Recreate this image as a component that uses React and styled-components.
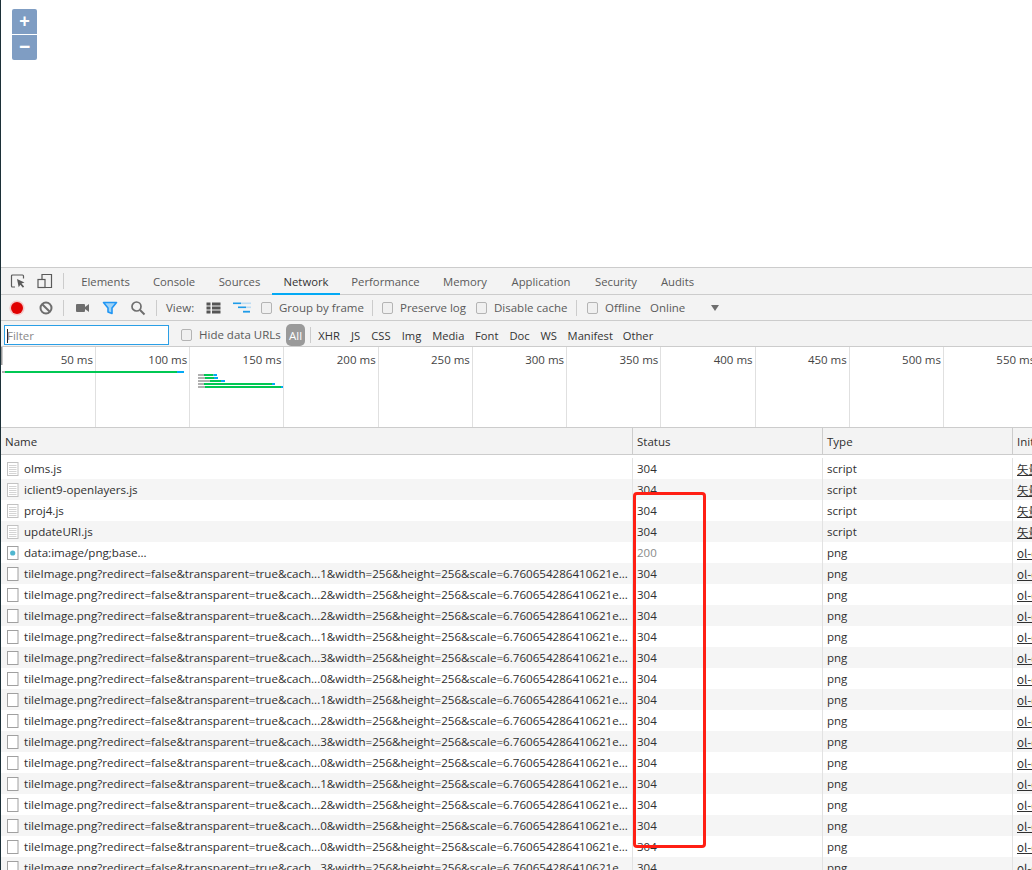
import React from "react";
import styled, { createGlobalStyle } from "styled-components";

const Global = createGlobalStyle`
  html, body { margin: 0; padding: 0; background: #fff; }
  body { font-family: "Open Sans", "Noto Sans", "Noto Sans CJK SC", sans-serif; font-size: 11.5px; color: #303030; }
`;

const Page = styled.div`
  width: 1032px; height: 870px; box-sizing: border-box; position: relative;
  border-left: 1px solid #1c3038; overflow: hidden; display: flex; flex-direction: column;
`;
const MapArea = styled.div`
  height: 267px; flex: none; box-sizing: border-box; padding: 9px 11px; display: flex; flex-direction: column; gap: 1px;
`;
const ZoomBtn = styled.div`
  width: 25px; height: 25px; background: #7f9dc3; color: #fff; font: bold ${p => p.$top ? 18 : 19}px/24px "Liberation Sans", sans-serif;
  text-align: center; border-radius: ${p => p.$top ? "2px 2px 0 0" : "0 0 2px 2px"};
`;
const Devtools = styled.div`flex: 1; min-height: 0; display: flex; flex-direction: column; background: #fff;`;
const Bar = styled.div`
  flex: none; height: ${p => p.$h}px; box-sizing: border-box; background: #f3f3f3; display: flex; align-items: center;
  padding-top: ${p => p.$pt || 0}px;
  border-bottom: 1px solid #ccc; border-top: ${p => p.$top ? "1px solid #ccc" : "0"}; color: #5a5a5a; white-space: nowrap;
`;
const Slot = styled.div`
  flex: none; width: ${p => p.$w}px; height: 100%; display: flex; align-items: center; justify-content: ${p => p.$left ? "flex-start" : "center"};
`;
const Sep = styled.div`flex: none; width: 1px; height: 16px; background: #ccc; margin: 0 ${p => p.$r}px 0 ${p => p.$l}px;`;
const Tab = styled.div`
  flex: none; width: ${p => p.$w}px; height: 27px; box-sizing: border-box; display: flex; align-items: center; justify-content: center;
  font-size: 11.3px; padding-top: 2px;
  color: ${p => p.$on ? "#333" : "#5a5a5a"}; border-bottom: 2px solid ${p => p.$on ? "#03a9f4" : "transparent"};
  margin-bottom: -1px;
`;
const Check = styled.span`
  flex: none; width: 9px; height: 10px; border: 1px solid #b4b4b4; border-radius: 2px; background: #f0f0f0; margin-right: 7px;
`;
const Label = styled.span`color: ${p => p.$c || "#5a5a5a"};`;
const FilterInput = styled.div`
  flex: none; margin-left: 3px; width: 165px; height: 20px; box-sizing: border-box; border: 1px solid #2b9fe6; background: #fff;
  display: flex; align-items: center; padding: 2px 0 0 2px; color: #8a8a8a; margin-right: 12px;
`;
const Caret = styled.span`width: 1px; height: 14px; background: #222; margin-right: -1px;`;
const AllBtn = styled.div`
  flex: none; width: 19px; height: 22px; margin-top: 1px; border-radius: 5px; background: #9a9a9a; color: #fff; display: flex; align-items: center; justify-content: center;
`;
const Type = styled.div`flex: none; width: ${p => p.$w}px; padding-top: 1px; text-align: center; color: #333; font-size: 11.2px;`;
const Timeline = styled.div`
  flex: none; height: 81px; box-sizing: border-box; padding-left: 0.78px; border-bottom: 1px solid #ccc; background: #fff; display: flex; position: relative; overflow: hidden;
`;
const Tick = styled.div`
  flex: none; width: 94.22px; box-sizing: border-box; border-right: 1px solid #e0e0e0; text-align: right; padding: 5px 2px 0 0; color: #444; line-height: 16px;
`;
const Overlay = styled.svg`position: absolute; left: -1px; top: 0; pointer-events: none;`;
const HeadRow = styled.div`
  flex: none; height: 27px; box-sizing: border-box; background: #f3f3f3; border-bottom: 1px solid #ccc; display: flex; color: #333;
`;
const Cell = styled.div`
  flex: none; width: ${p => p.$w}px; box-sizing: border-box; padding-left: ${p => p.$pl || 4}px; display: flex; align-items: center; overflow: hidden; white-space: nowrap;
  border-left: ${p => p.$first ? "0" : `1px solid ${p.$head ? "#ccc" : "#e2e2e2"}`}; color: ${p => p.$c || "#303030"};
`;
const Rows = styled.div`flex: 1; min-height: 0; padding-top: 3px; overflow: hidden;`;
const Row = styled.div`display: flex; height: 21px; background: ${p => p.$alt ? "#f5f5f5" : "#fff"};`;
const FileName = styled.span`margin-left: 5px; font-size: 11.6px;`;
const Link = styled.span`text-decoration: underline; color: #303030; font-family: "Noto Sans CJK SC", "Open Sans", sans-serif;`;
const Mark = styled.div`
  position: absolute; left: 632px; top: 492px; width: 73px; height: 356px; box-sizing: border-box; border: 3px solid #ff1f14; border-radius: 4px;
`;

const Icon = ({ w = 16, h = 16, children }) => <svg width={w} height={h} viewBox={`0 0 ${w} ${h}`} style={{ display: "block" }}>{children}</svg>;

const FileIcon = ({ kind }) => (
  <svg width="13" height="14" viewBox="0 0 13 14" style={{ flex: "none", display: "block" }}>
    <rect x="1.5" y="0.5" width="10.5" height="13" fill="#fff" stroke={kind === "doc" ? "#c2c2c2" : "#a0a0a0"} />
    {kind === "doc" && [3, 5, 7, 9, 11].map(y => <rect key={y} x="3" y={y} width="7.5" height="1" fill="#d4d4d4" />)}
    {kind === "dot" && <circle cx="6.7" cy="7" r="2.6" fill="#4fb6cf" />}
  </svg>
);

const longName = d => `tileImage.png?redirect=false&transparent=true&cach...${d}&width=256&height=256&scale=6.760654286410621e...`;
const rows = [
  { n: "olms.js", s: "304", t: "script", i: "矢量瓦片", k: "doc" },
  { n: "iclient9-openlayers.js", s: "304", t: "script", i: "矢量瓦片", k: "doc" },
  { n: "proj4.js", s: "304", t: "script", i: "矢量瓦片", k: "doc" },
  { n: "updateURI.js", s: "304", t: "script", i: "矢量瓦片", k: "doc" },
  { n: "data:image/png;base...", s: "200", t: "png", i: "ol-debug.js", k: "dot", dim: true },
  ...[1, 2, 2, 1, 3, 0, 1, 2, 3, 0, 1, 2, 0, 0, 3].map(d => ({ n: longName(d), s: "304", t: "png", i: "ol-debug.js", k: "blank" })),
];

const tabs = [["Elements", 71], ["Console", 66], ["Sources", 65], ["Network", 68, true], ["Performance", 91], ["Memory", 68], ["Application", 84], ["Security", 66], ["Audits", 57]];
const types = [["XHR", 32], ["JS", 21], ["CSS", 30], ["Img", 31], ["Media", 42.5], ["Font", 34.5], ["Doc", 31], ["WS", 27.5], ["Manifest", 55.5], ["Other", 40]];
const ticks = [50, 100, 150, 200, 250, 300, 350, 400, 450, 500, 550];
const bars = [
  [2, 5, 177, 184, 371],
  [198, 204, 213.5, 217, 374],
  [198, 205, 214, 218, 377],
  [198, 210, 221, 225, 380],
  [198, 204, 272, 275, 383],
  [198, 205, 281, 283, 386],
];

export default function App() {
  return (
    <Page>
      <Global />
      <MapArea>
        <ZoomBtn $top>+</ZoomBtn>
        <ZoomBtn>−</ZoomBtn>
      </MapArea>
      <Devtools>
        <Bar $h={28} $top>
          <Slot $w={34}>
            <Icon>
              <path d="M5 14H2.5a1 1 0 0 1-1-1V3a1 1 0 0 1 1-1h10a1 1 0 0 1 1 1v2.5" fill="none" stroke="#5a5a5a" strokeWidth="1.2" />
              <path d="M7 6l7.5 3.6-3 1 2.6 3-1.2 1.1-2.6-3-1.6 2.6z" fill="#5a5a5a" />
            </Icon>
          </Slot>
          <Slot $w={19}>
            <Icon>
              <path d="M5 6V1.5h9.5v13H8" fill="none" stroke="#5a5a5a" strokeWidth="1.2" />
              <rect x="1" y="6.5" width="7" height="8" fill="#f3f3f3" stroke="#5a5a5a" strokeWidth="1.2" />
            </Icon>
          </Slot>
          <Sep $l={9} $r={6} />
          {tabs.map(([t, w, on]) => <Tab key={t} $w={w} $on={on}>{t}</Tab>)}
        </Bar>
        <Bar $h={26}>
          <Slot $w={32}>
            <Icon>
              <circle cx="8" cy="8" r="7.6" fill="#f3b5b5" opacity="0.7" />
              <circle cx="8" cy="8" r="6" fill="#e00000" />
            </Icon>
          </Slot>
          <Slot $w={25}>
            <Icon>
              <circle cx="8" cy="8" r="5.5" fill="none" stroke="#6e6e6e" strokeWidth="2" />
              <path d="M4.2 4.2l7.6 7.6" stroke="#6e6e6e" strokeWidth="2" />
            </Icon>
          </Slot>
          <Sep $l={5} $r={5} />
          <Slot $w={26}>
            <Icon>
              <rect x="2" y="4" width="9" height="8" rx="1" fill="#6e6e6e" />
              <path d="M11 7l4-3v8l-4-3z" fill="#6e6e6e" />
            </Icon>
          </Slot>
          <Slot $w={29}>
            <Icon>
              <path d="M1.5 2.5h13L10 8v5.5l-4-1.5V8z" fill="#9fd3f7" stroke="#2196f3" strokeWidth="1.6" strokeLinejoin="round" />
            </Icon>
          </Slot>
          <Slot $w={28}>
            <Icon>
              <circle cx="6.5" cy="6.5" r="4.5" fill="none" stroke="#6e6e6e" strokeWidth="1.7" />
              <path d="M10 10l4.5 4.5" stroke="#6e6e6e" strokeWidth="2" />
            </Icon>
          </Slot>
          <Sep $l={4} $r={9} />
          <Slot $w={40} $left><Label>View:</Label></Slot>
          <Slot $w={27} $left>
            <Icon w={15} h={12}>
              {[0.5, 4.5, 8.5].map(y => <g key={y}><rect x="0.5" y={y} width="4" height="3" fill="#555" /><rect x="6" y={y} width="8.5" height="3" fill="#555" /></g>)}
            </Icon>
          </Slot>
          <Slot $w={28} $left>
            <Icon w={18} h={12}>
              <rect x="0" y="0.5" width="8" height="1.6" fill="#1e9be8" />
              <rect x="8" y="0.5" width="10" height="1.6" fill="#bcdcf3" />
              <rect x="5" y="4.5" width="8" height="1.6" fill="#1e9be8" />
              <rect x="13" y="4.5" width="5" height="1.6" fill="#bcdcf3" />
              <rect x="10" y="8.8" width="7" height="1.8" fill="#1e9be8" />
            </Icon>
          </Slot>
          <Slot $w={111} $left><Check /><Label>Group by frame</Label></Slot>
          <Sep $l={0} $r={9} />
          <Slot $w={94} $left><Check /><Label>Preserve log</Label></Slot>
          <Slot $w={100} $left><Check /><Label>Disable cache</Label></Slot>
          <Sep $l={0} $r={10} />
          <Slot $w={63} $left><Check /><Label>Offline</Label></Slot>
          <Slot $w={61} $left><Label>Online</Label></Slot>
          <Slot $w={8}>
            <Icon w={8} h={6}><path d="M0 0h8L4 6z" fill="#6e6e6e" /></Icon>
          </Slot>
        </Bar>
        <Bar $h={26} $pt={2}>
          <FilterInput><Caret />Filter</FilterInput>
          <Slot $w={105} $left><Check /><Label>Hide data URLs</Label></Slot>
          <AllBtn>All</AllBtn>
          <Sep $l={5} $r={2} />
          {types.map(([t, w]) => <Type key={t} $w={w}>{t}</Type>)}
        </Bar>
        <Timeline>
          {ticks.map(t => <Tick key={t}>{t} ms</Tick>)}
          <Overlay width="1032" height="81" viewBox="0 347 1032 81">
            <rect x="1" y="347" width="1.5" height="18" fill="#9a9a9a" />
            {bars.map(([a, b, c, d, y]) => (
              <g key={y}>
                <rect x={a} y={y} width={b - a} height={2} fill="#b0b0b0" />
                <rect x={b} y={y} width={c - b} height={2} fill="#00c853" />
                <rect x={c} y={y} width={d - c} height={2} fill="#03a9f4" />
              </g>
            ))}
          </Overlay>
        </Timeline>
        <HeadRow>
          <Cell $first $w={631} $head>Name</Cell>
          <Cell $w={190} $head>Status</Cell>
          <Cell $w={190} $head>Type</Cell>
          <Cell $w={60} $head>Initiator</Cell>
        </HeadRow>
        <Rows>
          {rows.map((r, i) => (
            <Row key={i} $alt={i % 2 === 1}>
              <Cell $first $w={631} $pl={5}>
                <FileIcon kind={r.k} />
                <FileName>{r.n}</FileName>
              </Cell>
              <Cell $w={190} $c={r.dim ? "#8a8a8a" : undefined}>{r.s}</Cell>
              <Cell $w={190}>{r.t}</Cell>
              <Cell $w={60}><Link>{r.i}</Link></Cell>
            </Row>
          ))}
        </Rows>
      </Devtools>
      <Mark />
    </Page>
  );
}
